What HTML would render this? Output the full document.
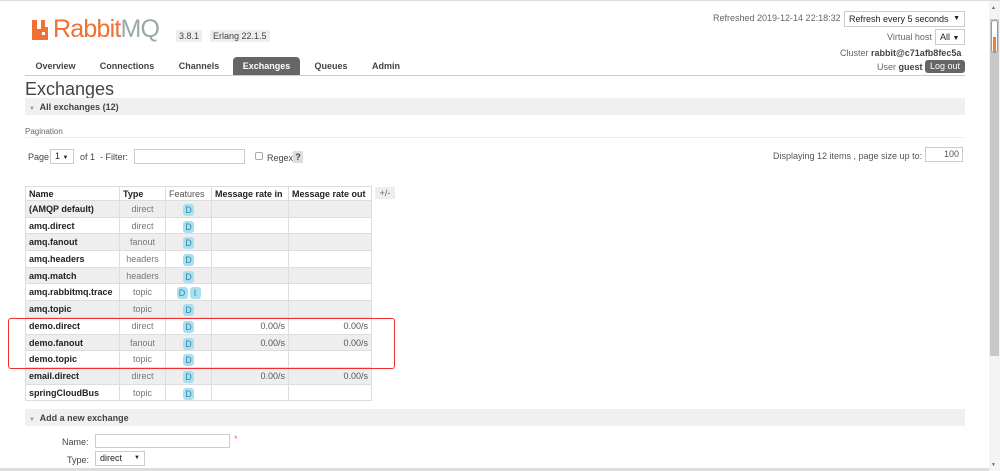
<!DOCTYPE html>
<html><head><meta charset="utf-8"><style>
*{box-sizing:border-box;margin:0;padding:0}
body{width:1000px;height:470px;overflow:hidden;background:#fff;font-family:"Liberation Sans","DejaVu Sans",sans-serif;font-size:9px;color:#444;position:relative;border-top:1px solid #ddd}
.a{position:absolute;white-space:nowrap}
.b{font-weight:bold}
.tab{position:absolute;top:56px;height:18px;line-height:18px;font-weight:bold;font-size:9px;color:#444;text-align:center}
.sel{border:1px solid #ccc;background:#fff;height:15px;line-height:13px;padding:0 4px;font-size:9px;color:#222}
table{position:absolute;left:25px;top:185px;border-collapse:collapse;font-size:9px;table-layout:fixed}
td,th{border:1px solid #ddd;height:16.7px;padding:0 3px;white-space:nowrap;line-height:12px}
td{vertical-align:top;padding-top:2px}
th{text-align:left;font-weight:bold;color:#222;background:#fff;height:14px;vertical-align:middle}
tr.g td{background:#eee}
td.n{font-weight:bold;color:#222}
td.t{text-align:center;color:#777}
td.f{text-align:center;padding-top:3px}
td.r{text-align:right;color:#555}
.d{display:inline-block;background:#a8e0f0;color:#3388aa;border-radius:3px;width:11px;height:12px;line-height:12px;text-align:center;font-size:9px;margin:0 1px}
</style></head><body>
<div class="a" style="left:32px;top:19px;width:20px;height:20px;">
<svg width="20" height="20" viewBox="0 0 20 20"><path d="M0 0h5v9h4V0h4v7h3v13H0z" fill="#f06f32"/><rect x="10" y="12" width="3" height="3" fill="#fff"/></svg></div>
<div class="a" style="left:53px;top:14px;font-size:25px;color:#f06f32;letter-spacing:-0.8px">Rabbit<span style="color:#9aa">MQ</span></div>
<div class="a" style="left:176px;top:29px;background:#eee;padding:1px 3px;font-size:9px">3.8.1</div>
<div class="a" style="left:210px;top:29px;background:#eee;padding:1px 3px;font-size:9px">Erlang 22.1.5</div>
<div class="tab" style="left:28px;width:55px">Overview</div>
<div class="tab" style="left:96px;width:62px">Connections</div>
<div class="tab" style="left:174px;width:50px">Channels</div>
<div class="tab" style="left:233px;width:67px;background:#666;color:#fff;border-radius:4px 4px 0 0">Exchanges</div>
<div class="tab" style="left:310px;width:42px">Queues</div>
<div class="tab" style="left:365px;width:42px">Admin</div>
<div class="a" style="left:25px;top:74px;width:940px;height:1px;background:#ccc"></div>
<div class="a" style="left:713px;top:12px;color:#666">Refreshed 2019-12-14 22:18:32</div>
<div class="a sel" style="left:844px;top:10px;width:121px;height:16px;line-height:14px">Refresh every 5 seconds <span style="float:right;font-size:7px">▼</span></div>
<div class="a" style="left:887px;top:31px;color:#666">Virtual host</div>
<div class="a sel" style="left:935px;top:28px;width:30px;height:16px;line-height:14px">All <span style="font-size:7px">▼</span></div>
<div class="a" style="left:840px;top:47px;color:#666">Cluster <b style="color:#444">rabbit@c71afb8fec5a</b></div>
<div class="a" style="left:877px;top:61px;color:#666">User <b style="color:#444">guest</b></div>
<div class="a" style="left:925px;top:59px;width:40px;height:13px;line-height:13px;background:#666;color:#fff;border-radius:3px;text-align:center">Log out</div>
<div class="a" style="left:25px;top:78px;font-size:18px;color:#444">Exchanges</div>
<div class="a" style="left:25px;top:97px;width:940px;height:17px;background:#f0f0f0"></div>
<div class="a b" style="left:29px;top:101px;color:#444"><span style="font-size:6px;color:#999">▼</span>&nbsp; All exchanges (12)</div>
<div class="a" style="left:25px;top:126px;color:#666;font-size:8px">Pagination</div>
<div class="a" style="left:25px;top:136px;width:940px;height:1px;background:#eee"></div>
<div class="a" style="left:28px;top:151px">Page</div>
<div class="a sel" style="left:50px;top:148px;width:24px">1 <span style="font-size:6px">▼</span></div>
<div class="a" style="left:80px;top:151px">of 1 &nbsp;- Filter:</div>
<div class="a" style="left:134px;top:148px;width:111px;height:15px;border:1px solid #ccc"></div>
<div class="a" style="left:255px;top:151px;width:8px;height:8px;border:1px solid #aaa;border-radius:2px"></div>
<div class="a" style="left:267px;top:152px">Regex</div>
<div class="a" style="left:293px;top:150px;width:10px;height:12px;background:#ddd;text-align:center;line-height:12px;font-weight:bold">?</div>
<div class="a" style="left:773px;top:150px;color:#555">Displaying 12 items , page size up to:</div>
<div class="a" style="left:925px;top:146px;width:38px;height:15px;border:1px solid #ccc;text-align:right;padding-right:3px;line-height:13px;color:#555">100</div>
<table>
<colgroup><col style="width:94px"><col style="width:46px"><col style="width:46px"><col style="width:77px"><col style="width:83px"></colgroup>
<tr><th>Name</th><th>Type</th><th style="font-weight:normal;color:#555">Features</th><th>Message rate in</th><th>Message rate out</th></tr>
<tr class="g"><td class="n">(AMQP default)</td><td class="t">direct</td><td class="f"><span class="d">D</span></td><td></td><td></td></tr>
<tr><td class="n">amq.direct</td><td class="t">direct</td><td class="f"><span class="d">D</span></td><td></td><td></td></tr>
<tr class="g"><td class="n">amq.fanout</td><td class="t">fanout</td><td class="f"><span class="d">D</span></td><td></td><td></td></tr>
<tr><td class="n">amq.headers</td><td class="t">headers</td><td class="f"><span class="d">D</span></td><td></td><td></td></tr>
<tr class="g"><td class="n">amq.match</td><td class="t">headers</td><td class="f"><span class="d">D</span></td><td></td><td></td></tr>
<tr><td class="n">amq.rabbitmq.trace</td><td class="t">topic</td><td class="f"><span class="d">D</span><span class="d">I</span></td><td></td><td></td></tr>
<tr class="g"><td class="n">amq.topic</td><td class="t">topic</td><td class="f"><span class="d">D</span></td><td></td><td></td></tr>
<tr><td class="n">demo.direct</td><td class="t">direct</td><td class="f"><span class="d">D</span></td><td class="r">0.00/s</td><td class="r">0.00/s</td></tr>
<tr class="g"><td class="n">demo.fanout</td><td class="t">fanout</td><td class="f"><span class="d">D</span></td><td class="r">0.00/s</td><td class="r">0.00/s</td></tr>
<tr><td class="n">demo.topic</td><td class="t">topic</td><td class="f"><span class="d">D</span></td><td></td><td></td></tr>
<tr class="g"><td class="n">email.direct</td><td class="t">direct</td><td class="f"><span class="d">D</span></td><td class="r">0.00/s</td><td class="r">0.00/s</td></tr>
<tr><td class="n">springCloudBus</td><td class="t">topic</td><td class="f"><span class="d">D</span></td><td></td><td></td></tr>
</table>
<div class="a" style="left:375px;top:186px;width:20px;height:12px;background:#eee;text-align:center;line-height:12px;color:#666">+/-</div>
<div class="a" style="left:8px;top:317px;width:387px;height:51px;border:1.5px solid #f03030;border-radius:3px"></div>
<div class="a" style="left:25px;top:408px;width:940px;height:17px;background:#f0f0f0"></div>
<div class="a b" style="left:29px;top:412px"><span style="font-size:6px;color:#999">▼</span>&nbsp; Add a new exchange</div>
<div class="a" style="left:62px;top:436px">Name:</div>
<div class="a" style="left:95px;top:433px;width:135px;height:14px;border:1px solid #ccc"></div>
<div class="a" style="left:234px;top:433px;color:#f66">*</div>
<div class="a" style="left:67px;top:454px">Type:</div>
<div class="a sel" style="left:95px;top:450px;width:50px;height:15px">direct <span style="float:right;font-size:6px">▼</span></div>
<div class="a" style="left:0;top:467px;width:1000px;height:3px;background:#ddd"></div>
<div class="a" style="left:989px;top:0;width:11px;height:470px;background:#f4f4f4"></div>
<div class="a" style="left:990px;top:18px;width:9px;height:337px;background:#c8c8c8"></div>
<div class="a" style="left:991px;top:19px;width:7px;height:33px;background:#fff;border:1px solid #999;border-radius:3px"></div>
<div class="a" style="left:993px;top:36px;width:3px;height:15px;background:#f07f32"></div>
<div class="a" style="left:991px;top:4px;font-size:5px;color:#666">▲</div>
<div class="a" style="left:991px;top:461px;font-size:5px;color:#666">▼</div>
</body></html>
